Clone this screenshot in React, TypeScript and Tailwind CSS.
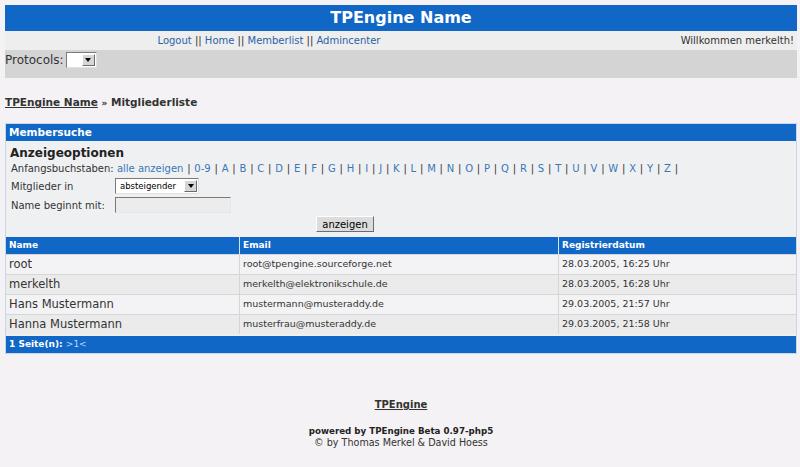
const letters = ['0-9', 'A', 'B', 'C', 'D', 'E', 'F', 'G', 'H', 'I', 'J', 'K', 'L', 'M', 'N', 'O', 'P', 'Q', 'R', 'S', 'T', 'U', 'V', 'W', 'X', 'Y', 'Z'];

const members = [
  { name: 'root', email: 'root@tpengine.sourceforge.net', date: '28.03.2005, 16:25 Uhr' },
  { name: 'merkelth', email: 'merkelth@elektronikschule.de', date: '28.03.2005, 16:28 Uhr' },
  { name: 'Hans Mustermann', email: 'mustermann@musteraddy.de', date: '29.03.2005, 21:57 Uhr' },
  { name: 'Hanna Mustermann', email: 'musterfrau@musteraddy.de', date: '29.03.2005, 21:58 Uhr' },
];

function SelectBox({ label, width }: { label: string; width: string }) {
  return (
    <div className={`flex items-center h-[16px] ${width} bg-white border border-t-[#7a7a7a] border-l-[#7a7a7a] border-b-[#e0e0e0] border-r-[#e0e0e0]`}>
      <span className="flex-1 pl-[4px] text-[8.5px] leading-none text-black">{label}</span>
      <span className="w-[13px] h-[12px] mr-[1px] bg-[#d6d6d6] border border-t-white border-l-white border-b-[#6c6c6c] border-r-[#6c6c6c] flex items-center justify-center">
        <span className="w-0 h-0 border-l-[3px] border-r-[3px] border-t-[4px] border-l-transparent border-r-transparent border-t-black" />
      </span>
    </div>
  );
}

export default function App() {
  return (
    <div className="min-h-[467px] bg-[#f4f2f4] pt-[5px] pl-[5px] pr-[3px] text-[#333] font-['DejaVu_Sans',sans-serif]">
      <div className="h-[26px] bg-[#1167c6] flex items-center justify-center text-white font-bold text-[16px]">TPEngine Name</div>
      <div className="h-[19px] bg-[#eeeeee] grid grid-cols-[2fr_1fr] items-center text-[10px] leading-[13px]">
        <div className="text-center text-[#2f2f2f]">
          <span className="text-[#2b62a6]">Logout</span> || <span className="text-[#2b62a6]">Home</span> || <span className="text-[#2b62a6]">Memberlist</span> || <span className="text-[#2b62a6]">Admincenter</span>
        </div>
        <div className="text-right pr-[3px] text-[#333]">Willkommen merkelth!</div>
      </div>
      <div className="h-[28px] bg-[#d4d4d4] flex items-start pt-[2px] gap-[2px] text-[12px] text-[#333]">
        <span className="leading-[16px]">Protocols:</span>
        <SelectBox label="" width="w-[31px]" />
      </div>

      <div className="mt-[17px] text-[10.5px] leading-[14px] font-bold">
        <span className="underline">TPEngine Name</span> <span className="text-[9px]">»</span> Mitgliederliste
      </div>

      <div className="mt-[13px] border border-[#c7d6e8] bg-[#eff0f2]">
        <div className="h-[17px] bg-[#1167c6] flex items-center pl-[3px] text-white font-bold text-[10.5px]">Membersuche</div>
        <div className="px-[4px] pt-[5px] pb-[5px]">
          <div className="text-[12px] leading-[14px] font-bold text-[#222]">Anzeigeoptionen</div>
          <div className="mt-[2px] text-[10px] leading-[13px] text-[#333] pl-[1px] whitespace-nowrap">
            Anfangsbuchstaben: <span className="text-[#3a76b6]">alle anzeigen</span>
            {letters.map(l => (
              <span key={l}><span className="px-[3.8px]">|</span><span className="text-[#3a76b6]">{l}</span></span>
            ))}<span className="pl-[3.8px]">|</span>
          </div>
          <div className="mt-[3px] flex items-center text-[10px] leading-[13px] pl-[1px]">
            <span className="w-[104px]">Mitglieder in</span>
            <SelectBox label="absteigender" width="w-[84px]" />
          </div>
          <div className="mt-[3px] flex items-center text-[10px] leading-[13px] pl-[1px]">
            <span className="w-[104px]">Name beginnt mit:</span>
            <div className="w-[116px] h-[16px] bg-[#ececec] border border-t-[#7a7a7a] border-l-[#7a7a7a] border-b-[#e6e6e6] border-r-[#e6e6e6]" />
          </div>
          <div className="mt-[3px] flex justify-center pr-[112px]">
            <div className="px-[5px] h-[16px] flex items-center bg-[#dcdcdc] border border-t-white border-l-white border-b-[#6c6c6c] border-r-[#6c6c6c] text-[10px] text-black">anzeigen</div>
          </div>
        </div>
        <div className="grid grid-cols-[233px_319px_1fr]">
          <div className="h-[17px] bg-[#1167c6] flex items-center pl-[3px] text-white font-bold text-[9px]">Name</div>
          <div className="h-[17px] bg-[#1167c6] border-l border-[#d8e4f2] flex items-center pl-[3px] text-white font-bold text-[9px]">Email</div>
          <div className="h-[17px] bg-[#1167c6] border-l border-[#d8e4f2] flex items-center pl-[3px] text-white font-bold text-[9px]">Registrierdatum</div>
          {members.map((m, i) => {
            const bg = i % 2 === 0 ? 'bg-[#f3f2f4]' : 'bg-[#ebebeb]';
            return [
              <div key={m.name + 'n'} className={`h-[20px] ${bg} border-t border-[#d6d6d6] flex items-center pl-[3px] text-[11.5px] text-[#333]`}>{m.name}</div>,
              <div key={m.name + 'e'} className={`h-[20px] ${bg} border-t border-l border-[#d6d6d6] flex items-center pl-[3px] text-[9.5px] text-[#333]`}>{m.email}</div>,
              <div key={m.name + 'd'} className={`h-[20px] ${bg} border-t border-l border-[#d6d6d6] flex items-center pl-[3px] text-[9.5px] text-[#333]`}>{m.date}</div>,
            ];
          })}
        </div>
        <div className="mt-[2px] h-[17px] bg-[#1167c6] flex items-center pl-[3px] text-white font-bold text-[9px]">
          1 Seite(n):&nbsp;<span className="font-normal text-[#bcd6f4]">&gt;1&lt;</span>
        </div>
      </div>

      <div className="mt-[44px] text-center">
        <div className="text-[10px] leading-[14px] font-bold underline text-[#333]">TPEngine</div>
        <div className="mt-[13px] text-[8.7px] leading-[12px] font-bold text-[#222]">powered by TPEngine Beta 0.97-php5</div>
        <div className="text-[9.6px] leading-[12px] text-[#333]">© by Thomas Merkel &amp; David Hoess</div>
      </div>
    </div>
  );
}
